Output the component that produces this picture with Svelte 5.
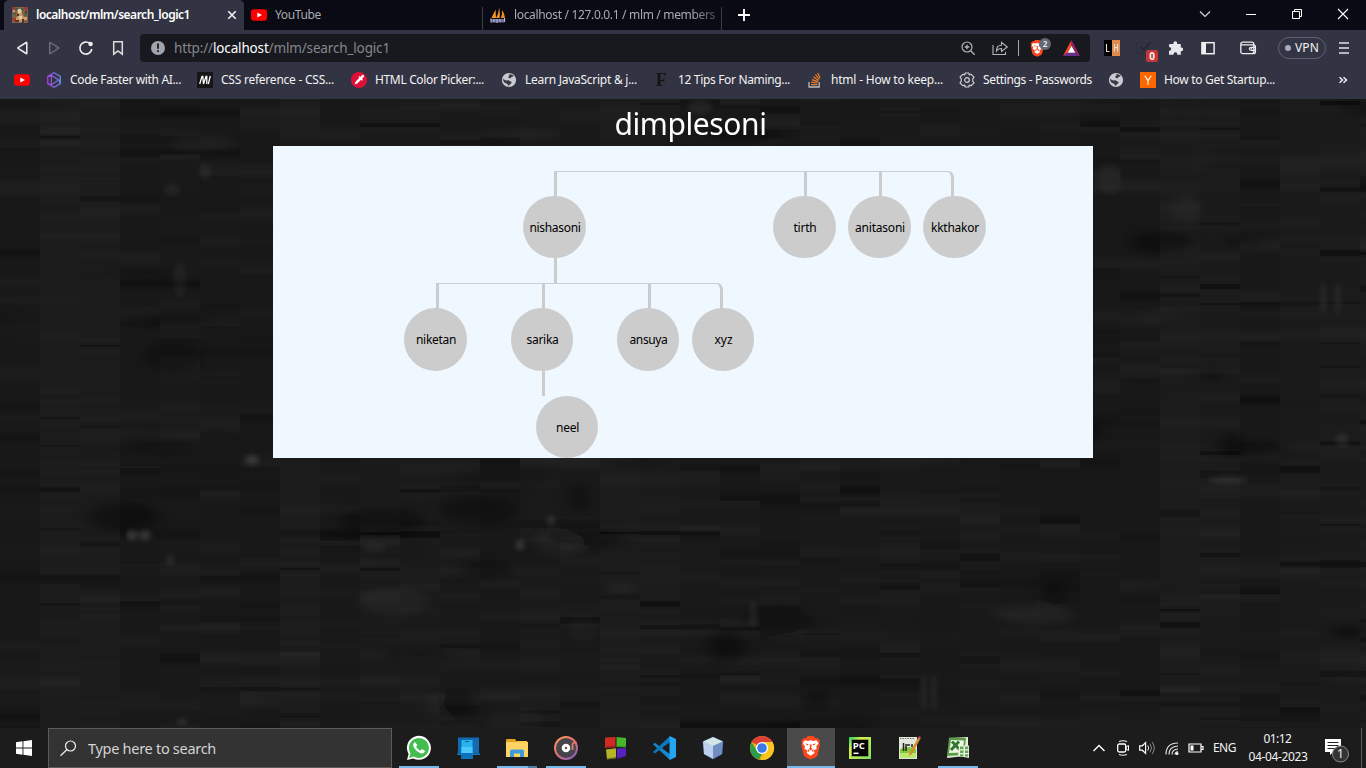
<script>
  const icons = {
    mlm: '<rect width="16" height="16" fill="#83604a"/><path d="M0 0h3v4H0zM12 0h4v3h-4zM0 11h4v3H0z" fill="#9b3d35"/><path d="M3 1h3v3H3zM9 1h3v3H9zM1 6h3v2H1zM12 6h3v3h-3z" fill="#48644c"/><path d="M5 3h5v4l2 3v5H4v-4l2-3z" fill="#c69a68"/><path d="M6 2h3v4H6zM7 9h3v3H7z" fill="#e4cba4"/><path d="M5 7h2v2H5zM3 13h4v2H3zM10 12h2v4h-2zM13 4h2v2h-2z" fill="#553128"/><path d="M12 10h3v3h-3zM1 3h2v2H1z" fill="#d0a26a"/>',
    youtube: '<rect y="2.200" width="16" height="11.600" rx="3" fill="#f00"/><path d="M6.300 5.400v5.200L11 8z" fill="#fff"/>',
    pma: '<path d="M5.500 2.500 1.500 11h4.500zM9 .5C10 4 10 8 9.500 11H6C8 8 8.800 4 9 .5z" fill="#f59a23"/><path d="M12 3c2 3 2.800 5 2.800 8h-4c1-2 1.500-5 1.200-8z" fill="#f08a1c"/><path d="M.5 12h15l-1.200 3.500H1.500z" fill="#6c6c95"/><path d="M1 11.500v4M4 12v3M7 12v4M10 12v3M14.500 11v4" stroke="#bbbbd4" stroke-width="1.100"/>',
    hex: '<path d="M8 .8 14.300 4.400v7.200L8 15.200 1.700 11.600V4.400z" fill="none" stroke="url(#hx)" stroke-width="1.300"/><path d="M5.300 3.300 12.800 8l-7.500 4.700zM1.700 4.500l3.600-1.200M1.700 11.600l3.600 1.100M12.800 8l1.500 3.500" fill="none" stroke="url(#hx)" stroke-width="1.200"/><defs><linearGradient id="hx"><stop stop-color="#a43fd6"/><stop offset="1" stop-color="#6688e8"/></linearGradient></defs>',
    mdn: '<rect width="16" height="16" fill="#151519"/><path d="M2.700 12 5 4.500h.8L6.500 12 9 4.500h.8V12" fill="none" stroke="#fff" stroke-width="1.300"/><path d="m11.300 12 2-8" stroke="#fff" stroke-width="1.300"/>',
    picker: '<circle cx="8" cy="8" r="8" fill="#df1038"/><path d="m3.700 12.300.8-2.600 4-4 1.800 1.800-4 4z" fill="#fff"/><path d="m8.300 5 2.700 2.700" stroke="#fff" stroke-width="1.500" stroke-linecap="round"/><path d="m10.200 5.800 1.600-1.600" stroke="#fff" stroke-width="2.600" stroke-linecap="round"/>',
    globe: '<circle cx="8" cy="8" r="7.100" fill="#c9cbd2"/><path d="M2.300 6.800C4 8 4.500 8.600 6.700 8.300c1.800-.2 1.600 1 3 1.300 1.500.3 1 1.800-.3 2.300-1 .5-1.200 1.200-1.600 2-1-.4-.8-1.500-1.500-2-1.300-.5-2.800-.6-3.700-2.300-.5-1-.5-2-.3-2.800z" fill="#383a46"/><path d="M8.300 2.200c1.300-.2 3.500.5 4.400 1.800-.7.700-1 .7-1.800.8-.8.200-.6 1.200-1.600 1.400-1.200.2-2.200-.4-2-1.400.2-.9 1.700-1 1-2.600z" fill="#383a46"/>',
    effe: '<text x="1.800" y="14" font-family="Liberation Serif, serif" font-size="18" font-weight="700" fill="#141414">F</text>',
    so: '<path d="M2 10v5h10.200v-5" fill="none" stroke="#b9babd" stroke-width="1.300"/><path d="M4 12.700h6.300M4.200 10.200l6.200.8M5 7.600l5.900 2M6.500 4.700l5 3.900M8.500 2.500l3.800 5M10.700 1l2.300 5" stroke="#f48024" stroke-width="1.200"/>',
    gear: '<path d="M6.200 1h3.600l.5 1.900 1.900-.6L15 5.200 13.700 7v2L15 10.800l-2.800 2.900-1.900-.6-.5 1.900H6.200l-.5-1.900-1.900.6L1 10.800 2.300 9V7L1 5.200l2.800-2.900 1.900.6z" fill="none" stroke="#d0d1d6" stroke-width="1.200" stroke-linejoin="round"/><circle cx="8" cy="8" r="2.300" fill="none" stroke="#d0d1d6" stroke-width="1.200"/>',
    yc: '<rect width="16" height="16" fill="#f60"/><path d="m4.800 3.800 3.200 5v4m0-4 3.200-5" fill="none" stroke="#fff" stroke-width="1.200"/>',
    back: '<path d="M12.800 2.800v10.400q0 .7-.6.300L4.100 8.400q-.6-.4 0-.8l8.100-5.100q.6-.4.600.3z" fill="none" stroke="#eee" stroke-width="1.500"/>',
    forward: '<path d="M3.700 2.800v10.400q0 .7.6.300l8.100-5.100q.6-.4 0-.8L4.300 2.500q-.6-.4-.6.300z" fill="none" stroke="#6c6e7b" stroke-width="1.400"/>',
    reload: '<path d="M12 3.700A6 6 0 1 0 13.800 9" fill="none" stroke="#eee" stroke-width="1.600"/><circle cx="12.600" cy="4" r="2.200" fill="#eee"/>',
    mark: '<path d="M3.700 1.800h8.600v12.400L8 10.900l-4.300 3.300z" fill="none" stroke="#ddd" stroke-width="1.500"/>',
    info: '<circle cx="8" cy="8" r="7" fill="#a1a3ad"/><path d="M7.100 3.600h1.800v5.200H7.100zM7.100 10.300h1.800v1.800H7.100z" fill="#17191f"/>',
    zoom: '<circle cx="7" cy="7" r="5" fill="none" stroke="#b4b5b9" stroke-width="1.200"/><path d="m10.700 10.700 4 4M4.700 7h4.600M7 4.700v4.600" stroke="#b4b5b9" stroke-width="1.300"/>',
    share: '<path d="M1 5v9.500h12.500V12M4.500 11c0-4.200 1.800-5.700 5-5.700V2.300L15.300 7l-5.800 4.500V8.500c-2.800 0-4 .8-5 2.500z" fill="none" stroke="#b4b5b9" stroke-width="1.100"/>',
    brave: '<path d="m3.100 1.500 1.800-.2L6 0h4l1.100 1.300 1.800.2 1.600 2-.5 1.500.4 1.200-1.600 6.700c-.3 1-1 1.500-2 2.100L8 16.200 5.200 15c-1-.6-1.700-1.100-2-2.100L1.600 6 2 5 1.500 3.500z" fill="#fa471d"/><path d="m4 3 2.200.5L8 2.900l1.800.6L12 3l1.500 2-1.700 2.200.5 1.400-2.200 1.600.6 1.500L8 13.500l-2.700-1.800.6-1.500-2.200-1.600.5-1.400L2.500 5z" fill="#fff"/><path d="m4.200 5.100 2.500.6-.8.800zM11.800 5.100l-2.500.6.800.8zM7.300 5.800h1.400L8.400 8l.9 1L8 9.800 6.700 9l.9-1zM6 9l1.500 1.200L6.200 11zM10 9l-1.500 1.200 1.300.8z" fill="#fa471d"/>',
    bat: '<path d="M8 0 0 15l4.300-3L8 5z" fill="#ff4724"/><path d="m8 0 8 15-4.300-3L8 5z" fill="#9e1f63"/><path d="M0 15h16l-4.300-3H4.300z" fill="#662d91"/><path d="M8 5.300 11.600 12H4.400z" fill="#fff"/>',
    lh: '<path d="M0 0h8v16H0z" fill="#000"/><path d="M8 0h8v16H8z" fill="#e08a4b"/><path d="M2.500 4v7.500h3M10.500 4v7.500M13.700 4v7.500M10.500 7.600h3.200" fill="none" stroke="#ddd" stroke-width="1.100"/>',
    check: '<path d="M13.700 7v7H1V2.500h9" fill="none" stroke="#292c36" stroke-dasharray="1.500 1"/><path d="m4 6.500 3.500 3.700L15 2" fill="none" stroke="#272a34" stroke-width="2.500"/>',
    puzzle: '<path d="M2 4h3.400V3.200a1.900 1.900 0 0 1 3.800 0V4h3.600v3.400h.5a1.900 1.900 0 0 1 0 3.800h-.5v3.600H9.300v-.6a1.900 1.900 0 0 0-3.800 0v.6H1v-4h.7a1.900 1.900 0 0 0 0-3.700H1V5q0-1 1-1z" fill="#e8e8ec"/>',
    side: '<rect x="1.900" y="2.700" width="12.200" height="11" fill="none" stroke="#eee" stroke-width="1.500"/><path d="M2 2h4v12H2z" fill="#eee"/>',
    wallet: '<rect x=".8" y="2.200" width="13" height="11.500" rx="2" fill="none" stroke="#eee" stroke-width="1.300"/><path d="M1 4.900h12.500q1.900 0 1.900 2v5q0 1.800-2 1.800M15.400 7.300h-4q-2 0-2 1.500t2 1.500h4" fill="none" stroke="#eee" stroke-width="1.300"/><circle cx="11.600" cy="8.800" r=".8" fill="#eee"/>',
    menu: '<path d="M3 3h10M3 8h10M3 13h10" stroke="#e4e4e8" stroke-width="1.600"/>',
    more: '<path d="m3.500 5.200 3 2.800-3 2.800m4-5.600 3 2.800-3 2.800" fill="none" stroke="#eee" stroke-width="1.500"/>',
    close: '<path d="m4.300 4.300 7.400 7.400m0-7.400-7.400 7.400" stroke="#f2f2f2" stroke-width="1.600"/>',
    plus: '<path d="M8 2v12M2 8h12" stroke="#fff" stroke-width="1.900"/>',
    wdown: '<path d="m3 5.500 5 5 5-5" fill="none" stroke="#ddd" stroke-width="1.100"/>',
    wmin: '<path d="M3 8.500h10" stroke="#fff"/>',
    wrest: '<path d="M5.500 5.500v-2h7v7h-2M3.500 5.500h7v7h-7z" fill="none" stroke="#fff"/>',
    wclose: '<path d="m3 3 10 10m0-10L3 13" stroke="#fff" stroke-width="1.100"/>',
    win: '<path d="M0 2.200 6.500 1.300v6.200H0zM7.400 1.200 16 0v7.500H7.400zM0 8.400h6.500v6.300L0 13.800zM7.400 8.400H16V16l-8.600-1.200z" fill="#fff"/>',
    search: '<circle cx="10.500" cy="6" r="5" fill="none" stroke="#eee" stroke-width="1.200"/><path d="M7 9.500.5 15.700" stroke="#eee" stroke-width="1.300"/>',
    whatsapp: '<path d="M0 24 1.600 18A12 12 0 1 1 6.200 22.400z" fill="#fff"/><path d="m2 22 1.500-4.600A10 10 0 1 1 6.800 20.600z" fill="#43bd4f"/><path d="M8.200 6.300c-.6-.3-2 .7-2 2.400 0 3.500 5.200 8.700 8.800 8.700 1.700 0 3-1.400 2.900-2.700l-3-1.600-1.500 1.600c-1.800-.7-3.700-2.400-4.300-4.100l1.300-1.400z" fill="#fff"/>',
    desk: '<path d="M2 1.500h21v16H2z" fill="#126bb1"/><path d="M1 17.500h23v1.500H1z" fill="#1579c5"/><path d="M5.500 4h11v19h-11z" fill="#27b5f0"/><path d="M5.500 11h11v6h-11z" fill="#4cc9fa"/><path d="M5.500 17h11v6h-11z" fill="#0b72bc"/><path d="M9 5.500h4" stroke="#135f8a"/>',
    folder: '<path d="M1 4q0-1 1-1h8l2 3H1z" fill="#e5a01d"/><path d="M1 6h22v15H1z" fill="#ffd464"/><path d="M5 21v-6q0-1.500 1.500-1.500h11q1.500 0 1.500 1.500v6h-4v-3.500H9V21z" fill="#3e9cde"/><path d="M12 5h10v1.500H11z" fill="#fbc640"/>',
    groove: '<circle cx="12" cy="12" r="11" fill="#45454b" stroke="url(#gr)" stroke-width="1.900"/><circle cx="12" cy="12" r="4.300" fill="#fff"/><circle cx="12" cy="12" r="1.200" fill="#555"/><path d="M18.500 14V8.500q.3-2.500 4-2" fill="none" stroke="#f07866" stroke-width="1.800"/><defs><linearGradient id="gr" x1="0" y1="0" x2=".8" y2="1"><stop stop-color="#ff9e58"/><stop offset=".5" stop-color="#eb7174"/><stop offset="1" stop-color="#8e63bb"/></linearGradient></defs>',
    blocks: '<path d="M2 1.500 12.500 1v10.500L2 12z" fill="#cf2b23"/><path d="m13.500 1 9.500 1v9.500l-9.500-.5z" fill="#46b726"/><path d="m3 13.500 10-1.300v10L4 23.500z" fill="#b6b326"/><path d="m14 12.500 9-.5v8.500L14 23z" fill="#5620c2"/><path d="M3 11h10M14 11h9M4 23l9-1.500M14 22.500l9-2" stroke="#171717" opacity=".5"/>',
    vscode: '<path d="M1 8.200 2.800 6.800 18 18.200V24L1 8.200z" fill="#1488d2"/><path d="M18 0v6L2.800 17.500 1 16z" fill="#0a78bd"/><path d="M17.500 0 24 3v18l-6.500 3z" fill="#25a6f1"/>',
    cube: '<path d="M12 1 22 5.500 21 18l-9 5-9-5L2 5.500z" fill="#9eb5df" stroke="#25356b"/><path d="M12 1 22 5.500 12 10 2 5.500z" fill="#d4e7e4"/><path d="M12 10v13l-9-5-1-12.500z" fill="#bdcfef"/><path d="M12 10 22 5.500 21 18l-9 5z" fill="#728dc1"/>',
    chrome: '<circle cx="12" cy="12" r="12" fill="#efb91b"/><path d="M12 12 1.600 6a12 12 0 0 1 20.800 0z" fill="#dd4035"/><path d="M1.600 6 7 15l5 3-3 5.600A12 12 0 0 1 1.600 6z" fill="#2f9c4c"/><path d="M12 6h10.400A12 12 0 0 1 11 24l5.500-9z" fill="#fbc51f"/><circle cx="12" cy="12" r="6.100" fill="#fff"/><circle cx="12" cy="12" r="4.800" fill="#3b78e7"/>',
    pycharm: '<path d="M1 1h22v22H1z" fill="url(#py)"/><path d="M3.700 3.700h16.600v16.600H3.700z" fill="#050505"/><path d="M5.500 17.300h5" stroke="#fff" stroke-width="1.500"/><text x="4.800" y="12.700" textLength="12" lengthAdjust="spacingAndGlyphs" font-family="Open Sans, sans-serif" font-weight="700" font-size="9.500" fill="#fff">PC</text><defs><linearGradient id="py" y2="1"><stop stop-color="#20cf65"/><stop offset=".3" stop-color="#d7ef50"/><stop offset="1" stop-color="#7ee060"/></linearGradient></defs>',
    notepad: '<path d="M2 1h18v22H2z" fill="#e2e7dd"/><path d="M3 13q8-4 16 0v9H3z" fill="#81c83b"/><path d="M3 17h16v5H3z" fill="#bce76e"/><path d="M3 2.500h15" stroke="#777" stroke-dasharray="1.500 1"/><path d="M6.500 7v8M9 8v7M10 9h3M15 8v3" stroke="#222" stroke-width="1.500"/><path d="m21.500 1 2 1.500L15 18l-3 2 .7-3.500z" fill="#d98b32"/><path d="m22 0 2 1-1 2-2-1z" fill="#b6485b"/>',
    excel: '<path d="M4 2 22 1v17l-3 2L1 22z" fill="#e4f0da"/><path d="M3 1.500 20 2l-2 17L1 20z" fill="#5a9b46"/><path d="m5 4 13 .5-1.600 12L3 17z" fill="#eef6e8"/><path d="m6 5.500 8 8.500M13 5.500l-8 8.500" stroke="#327a2b" stroke-width="3"/><path d="M13 9.500h10V22L12 20z" fill="#e9f4e3"/><path d="M14 10.500h3.500v2.700H14zM19 10.500h3.200v2.700H19zM14 14.500h3.500v2.600H14zM19 14.500h3.200v2.600H19zM14 18.300h3.500v2H14zM19 18.300h3.200v2.300H19z" fill="#65a65a"/>',
    up: '<path d="m2.500 11 5.500-5.500 5.500 5.500" fill="none" stroke="#fff" stroke-width="1.400"/>',
    meet: '<path d="M4 1.500Q8 0 12 1.500M4 14.500Q8 16 12 14.500" fill="none" stroke="#eee" stroke-width="1.100"/><rect x="2.700" y="4" width="8" height="8" rx="1.500" fill="none" stroke="#fff" stroke-width="1.300"/><path d="m11 7 2.500-1.500v5L11 9z" fill="none" stroke="#fff"/>',
    sound: '<path d="M.7 5.800h2.600l3.300-3.200v10.800l-3.300-3.200H.7z" fill="none" stroke="#fff" stroke-width="1.200"/><path d="M8.800 5.500q1.700 2.500 0 5" fill="none" stroke="#eee"/><path d="M11 3.700q3 4.300 0 8.600M13.200 2q4.200 6 0 12" fill="none" stroke="#888"/>',
    wifi: '<path d="M2 14.500Q2 3 14 3M5 14.500Q5 6.500 14 6M8 14.500Q8 9.500 14 9M11 14.500Q11 12 14 11.500" fill="none" stroke="#ddd" stroke-width="1.200"/><circle cx="13" cy="13.500" r="1.500" fill="#fff"/>',
    battery: '<path d="M1 4h12v8H1zM13.500 6.500H15v3h-1.500" fill="none" stroke="#fff" stroke-width="1.200"/><path d="M2.500 5.500h3v5h-3z" fill="#fff"/>'
  };

  const bookmarks = [
    ['youtube', '', 32, 0],
    ['hex', 'Code Faster with AI...', 151, 111],
    ['mdn', 'CSS reference - CSS...', 154, 113],
    ['picker', 'HTML Color Picker:...', 150, 109],
    ['globe', 'Learn JavaScript & j...', 153, 112],
    ['effe', '12 Tips For Naming...', 153, 112],
    ['so', 'html - How to keep...', 152, 112],
    ['gear', 'Settings - Passwords', 149, 109],
    ['globe', '', 32, 0],
    ['yc', 'How to Get Startup...', 195, 111]
  ];

  const tasks = [
    ['whatsapp', 'run'], ['desk', ''], ['folder', 'run multi'], ['groove', 'run'],
    ['blocks', ''], ['vscode', ''], ['cube', ''], ['chrome', ''],
    ['brave', 'active'], ['pycharm', ''], ['notepad', ''], ['excel', 'run']
  ];

  const nodes = [
    ['nishasoni', 281.5, 81, 51], ['tirth', 531.5, 81, 23],
    ['anitasoni', 606.5, 81, 50], ['kkthakor', 681.5, 81, 48],
    ['niketan', 162.5, 193.500, 40], ['sarika', 269, 193.500, 32],
    ['ansuya', 375, 193.500, 38], ['xyz', 450, 193.500, 18],
    ['neel', 294, 281, 23]
  ];

  // Spreads the letters so that a label fills the given width.
  function fit(el, width) {
    const apply = () => {
      el.style.letterSpacing = '0px';
      const natural = el.getBoundingClientRect().width;
      const n = el.textContent.length;
      el.style.letterSpacing = `${(width - natural) / n}px`;
    };
    apply();
    document.fonts?.ready.then(apply);
  }

  let seed = 41;
  const rand = () => ((seed = (seed * 16807) % 2147483647) / 2147483647);

  // Dark wallpaper: soft horizontal streaks snapped to 40px blocks.
  const streaks = [];
  for (let x = 0; x < 1366; x += 40) {
    streaks.push({ x, y: -10, w: 40, h: 650, c: rand() > 0.5 ? '#fff' : '#000', o: rand() * 0.014 });
    for (let y = rand() * 12; y < 629; y += 7 + rand() * 24) {
      const light = rand() > 0.45;
      const wide = rand();
      streaks.push({
        x, y,
        w: wide > 0.85 ? 120 : wide > 0.6 ? 80 : 40, h: 3 + rand() * (light ? 9 : 6),
        c: light ? '#fff' : '#000', o: light ? rand() * 0.028 : rand() * rand() * 0.5
      });
    }
  }
  const shades = [];
  for (let i = 0; i < 70; i++) {
    const dark = rand() > 0.4;
    shades.push([rand() * 1366, rand() * 629, 10 + rand() * 34, 4 + rand() * 14, dark ? '#000' : '#fff', dark ? rand() * 0.4 : rand() * 0.035]);
  }
  const glints = [
    [132, 436, 6, 5, 0.15], [145, 436, 6, 5, 0.15], [252, 361, 7, 5, 0.13], [520, 446, 5, 5, 0.13],
    [551, 422, 4, 5, 0.1], [170, 461, 4, 6, 0.08], [182, 623, 5, 4, 0.09], [172, 91, 8, 6, 0.05],
    [205, 73, 6, 8, 0.05], [753, 515, 3, 14, 0.07], [1228, 381, 20, 4, 0.08], [1323, 200, 3, 16, 0.06],
    [1338, 200, 3, 16, 0.06], [1342, 341, 7, 7, 0.07], [973, 328, 20, 3, 0.05], [924, 594, 3, 18, 0.06],
    [934, 594, 3, 18, 0.06], [180, 181, 7, 18, 0.04], [1110, 80, 12, 16, 0.03], [700, 8, 12, 7, 0.06],
    [375, 448, 12, 4, 0.05], [808, 268, 14, 4, 0.05]
  ];
</script>

{#snippet icon(name, size = 16, box = 16)}
  <svg class="icon" width={size} height={size} viewBox="0 0 {box} {box}">{@html icons[name]}</svg>
{/snippet}

<div class="screen">
  <header class="tabs">
    <div class="tab current">
      {@render icon('mlm')}<span class="label" use:fit={154}>localhost/mlm/search_logic1</span>
      <span class="shut">{@render icon('close', 16)}</span>
    </div>
    <div class="tab second">{@render icon('youtube')}<span class="label" use:fit={46}>YouTube</span></div>
    <div class="tab third">{@render icon('pma')}<span class="label fade" use:fit={201}>localhost / 127.0.0.1 / mlm / members</span></div>
    <div class="new">{@render icon('plus')}</div>
    <div class="controls">
      {#each ['wdown', 'wmin', 'wrest', 'wclose'] as name}<span>{@render icon(name)}</span>{/each}
    </div>
  </header>

  <div class="toolbar">
    <nav class="navs">
      {#each ['back', 'forward', 'reload', 'mark'] as name}<span>{@render icon(name)}</span>{/each}
    </nav>
    <div class="address">
      {@render icon('info')}
      <span class="url" use:fit={216}>http://<b>localhost</b>/mlm/search_logic1</span>
      <div class="actions">
        {@render icon('zoom')}
        {@render icon('share')}
        <i class="rule"></i>
        <span class="shield">{@render icon('brave', 17, 16.500)}<em>2</em></span>
        {@render icon('bat', 17)}
      </div>
    </div>
    <div class="extensions">
      {@render icon('lh')}
      <span class="todo">{@render icon('check')}<em>0</em></span>
      {@render icon('puzzle')}
      {@render icon('side')}
      <span class="wallet">{@render icon('wallet')}</span>
    </div>
    <div class="vpn"><i></i><span class="label" use:fit={24}>VPN</span></div>
    <div class="menu">{@render icon('menu')}</div>
  </div>

  <div class="bookmarks">
    {#each bookmarks as [name, text, width, span]}
      <div class="bookmark" style="width: {width}px">
        {@render icon(name)}
        {#if text}<span class="label" use:fit={span}>{text}</span>{/if}
      </div>
    {/each}
    {@render icon('more')}
  </div>

  <main>
    <svg class="texture" width="1366" height="629" viewBox="0 0 1366 629">
      <defs>
        <filter id="soft" x="0" y="0" width="1" height="1"><feGaussianBlur stdDeviation="0.5 2.4" /></filter>
        <filter id="haze" x="0" y="0" width="1" height="1"><feGaussianBlur stdDeviation="7 3" /></filter>
        <filter id="glow" x="0" y="0" width="1" height="1"><feGaussianBlur stdDeviation="2.500" /></filter>
      </defs>
      <rect width="1366" height="629" fill="#191919" />
      <g filter="url(#haze)">
        {#each shades as [x, y, w, h, c, o]}<ellipse cx={x} cy={y} rx={w} ry={h} fill={c} opacity={o} />{/each}
      </g>
      <g filter="url(#soft)">
        {#each streaks as s}<rect x={s.x} y={s.y} width={s.w} height={s.h} fill={s.c} opacity={s.o} />{/each}
      </g>
      <g filter="url(#glow)">
        {#each glints as [x, y, w, h, o]}<ellipse cx={x} cy={y} rx={w} ry={h} fill="#fff" opacity={o} />{/each}
      </g>
    </svg>
    <h1><span class="label" use:fit={152}>dimplesoni</span></h1>
    <section class="tree">
      <svg class="links" width="820" height="312" viewBox="0 0 820 312">
        <path d="M281 25.500H676M163 137.500H445" stroke-width="1" />
        <path d="M282.500 25V51M532.500 25V51M607.500 25V51M282.500 111V138M164.500 137V164M270.500 137V164M376.500 137V164M270.500 224V250" />
        <path class="bend" d="M675 25Q681 25 681 33V52H678V33Q678 27 675 26zM444 137Q450 137 450 145V164H447V145Q447 139 444 138z" />
      </svg>
      {#each nodes as [text, x, y, span]}
        <div class="node" style="left: {x}px; top: {y}px"><span class="label" use:fit={span}>{text}</span></div>
      {/each}
    </section>
  </main>

  <footer>
    <div class="start">{@render icon('win')}</div>
    <div class="find">{@render icon('search')}<span class="label" use:fit={128}>Type here to search</span></div>
    <div class="apps">
      {#each tasks as [name, state]}
        <div class="app {state}">{@render icon(name, 24, name === 'brave' ? 16.500 : 24)}</div>
      {/each}
    </div>
    <div class="tray">
      {#each ['up', 'meet', 'sound', 'wifi', 'battery'] as name}<span>{@render icon(name)}</span>{/each}
    </div>
    <div class="lang"><span class="label" use:fit={23}>ENG</span></div>
    <div class="clock"><span class="label" use:fit={28}>01:12</span><span class="label" use:fit={59}>04-04-2023</span></div>
    <div class="notice">
      <svg width="26" height="26" viewBox="0 0 26 26">
        <path d="M1 2h16v13h-8l-3 3v-3H1z" fill="#fff" /><path d="M3.500 5.500h11M3.500 8.500h11M3.500 11.500h7" stroke="#222" />
        <circle cx="16.500" cy="17" r="8" fill="#343434" stroke="#8b8b8b" />
      </svg>
      <em>1</em>
    </div>
    <i class="peek"></i>
  </footer>
</div>

<style>
  :global(body) { margin: 0; overflow: hidden; background: #181818; }
  .screen { width: 1366px; height: 768px; display: flex; flex-direction: column; font: 12px/16px "Noto Sans", "Open Sans", sans-serif; color: #f2f2f2; overflow: hidden; }
  .icon { display: block; flex: none; overflow: visible; }
  .label { white-space: pre; flex: none; }
  em { font-style: normal; }

  .tabs { height: 30px; flex: none; display: flex; background: #0a0a14; padding-left: 4px; }
  .tab { box-sizing: border-box; height: 30px; display: flex; align-items: center; gap: 8px; color: #a9abb2; }
  .current { width: 240px; padding: 0 4px 0 8px; background: #323443; border-radius: 5px 5px 0 0; color: #fff; font-weight: 600; }
  .shut { margin-left: auto; }
  .second { width: 239px; padding-left: 7px; background: linear-gradient(#3b3c44, #3b3c44) right bottom / 1px 23px no-repeat; }
  .third { width: 239px; padding-left: 7px; background: linear-gradient(#3b3c44, #3b3c44) right bottom / 1px 23px no-repeat; }
  .fade { -webkit-mask-image: linear-gradient(90deg, #000 88%, #0006); mask-image: linear-gradient(90deg, #000 88%, #0006); }
  .new { margin-left: 14px; display: flex; align-items: center; }
  .controls { margin-left: auto; display: flex; align-items: center; }
  .controls span { width: 46px; display: flex; justify-content: center; transform: translateY(-1px); }

  .toolbar { height: 36px; flex: none; display: flex; align-items: center; background: #323443; }
  .navs { width: 140px; display: flex; padding-left: 6px; box-sizing: border-box; }
  .navs span { width: 32px; display: flex; justify-content: center; }
  .address { width: 950px; height: 28px; box-sizing: border-box; padding: 0 10px; display: flex; align-items: center; gap: 8px; background: #17191f; border-radius: 4px; }
  .url { font-size: 13.500px; color: #85878d; white-space: pre; }
  .url b { font-weight: 400; color: #fff; }
  .actions { margin-left: auto; display: flex; align-items: center; gap: 16px; }
  .rule { width: 1px; height: 16px; background: #a5a6aa; margin: 0 -6px 0 -6px; }
  .shield { position: relative; margin-right: 1px; }
  .shield em { position: absolute; left: 10px; top: -2px; width: 12px; height: 12px; border-radius: 6px; background: #646774; font: 600 8px/12px "Noto Sans", sans-serif; text-align: center; }
  .extensions { display: flex; align-items: center; gap: 16px; margin-left: 14px; }
  .todo { position: relative; }
  .todo em { position: absolute; left: 10px; top: 10px; width: 12px; height: 12px; border-radius: 2px; background: #c93434; font: 700 10px/12px "Noto Sans", sans-serif; text-align: center; }
  .wallet { margin-left: 8px; }
  .vpn { box-sizing: border-box; width: 48px; height: 22px; margin-left: 22px; border: 1px solid #5e6173; border-radius: 11px; display: flex; align-items: center; gap: 4px; padding-left: 6px; }
  .vpn i { width: 6px; height: 6px; border-radius: 3px; background: #a8abc0; }
  .menu { margin-left: 10px; }

  .bookmarks { height: 33px; flex: none; box-sizing: border-box; padding: 0 0 5px 14px; display: flex; align-items: center; background: #323443; }
  .bookmark { display: flex; align-items: center; gap: 8px; flex: none; }
  .bookmarks > :global(.icon) { margin-left: 1px; }

  main { position: relative; height: 629px; flex: none; display: flex; flex-direction: column; }
  .texture { position: absolute; inset: 0; }
  h1 { position: relative; margin: 0; height: 47px; font-size: 30px; line-height: 49px; font-weight: 400; color: #fff; display: flex; justify-content: center; padding-left: 15px; }
  .tree { position: relative; width: 820px; height: 312px; margin-left: 273px; background: #f0f8ff; color: #000; }
  .links { position: absolute; inset: 0; fill: none; stroke: #ccc; stroke-width: 3; }
  .bend { fill: #ccc; stroke: none; }
  .node { position: absolute; box-sizing: border-box; width: 62.500px; height: 62.500px; margin: -31.250px 0 0 -31.250px; padding: 1px 0 0 1px; border-radius: 50%; background: #ccc; display: flex; align-items: center; justify-content: center; }

  footer { height: 40px; flex: none; display: flex; align-items: center; background: #1c1c1c; }
  .start { width: 48px; display: flex; justify-content: center; }
  .find { box-sizing: border-box; width: 344px; height: 40px; border: 1px solid #5b5b5b; background: #333; display: flex; align-items: center; gap: 12px; padding-left: 11px; font-size: 14.500px; color: #d4d4d4; }
  .apps { display: flex; gap: 1px; padding-left: 3px; }
  .app { width: 48px; height: 40px; display: flex; align-items: center; justify-content: center; }
  .run { background: linear-gradient(#76b9ed, #76b9ed) center bottom / 40px 2px no-repeat; }
  .multi { background: linear-gradient(90deg, #76b9ed 31px, #4f7fa5 31px) center bottom / 40px 2px no-repeat; }
  .active { background: linear-gradient(#76b9ed, #76b9ed) bottom / 100% 2px no-repeat #4a4a4a; }
  .tray { margin-left: 105px; display: flex; }
  .tray span { width: 24.200px; display: flex; justify-content: center; }
  .lang { width: 30px; margin-left: 5px; }
  .clock { width: 64px; margin-left: 3px; display: flex; flex-direction: column; align-items: center; line-height: 18px; }
  .clock .label:first-child { margin-left: -1px; }
  .notice { position: relative; width: 26px; height: 26px; margin: 4px 0 0 14px; }
  .notice svg { display: block; }
  .notice em { position: absolute; left: 10px; top: 9px; width: 13px; text-align: center; }
  .peek { width: 1px; height: 40px; margin-left: auto; margin-right: 4px; background: #5c5c5c; }
</style>
